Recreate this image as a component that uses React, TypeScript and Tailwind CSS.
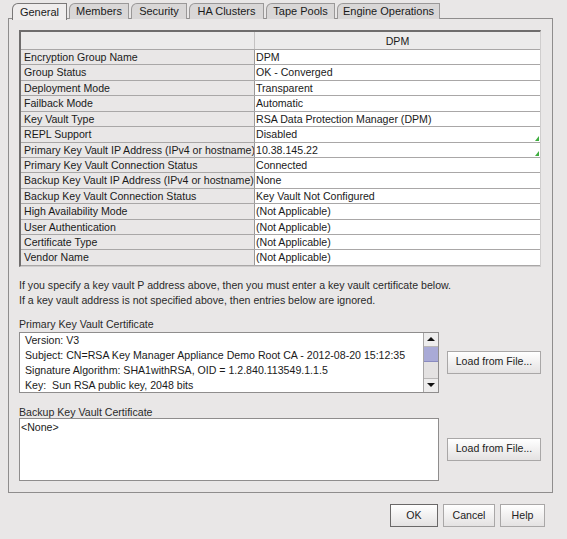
import React from 'react';

const rows: [string, string][] = [
  ['Encryption Group Name', 'DPM'],
  ['Group Status', 'OK - Converged'],
  ['Deployment Mode', 'Transparent'],
  ['Failback Mode', 'Automatic'],
  ['Key Vault Type', 'RSA Data Protection Manager (DPM)'],
  ['REPL Support', 'Disabled'],
  ['Primary Key Vault IP Address (IPv4 or hostname)', '10.38.145.22'],
  ['Primary Key Vault Connection Status', 'Connected'],
  ['Backup Key Vault IP Address (IPv4 or hostname)', 'None'],
  ['Backup Key Vault Connection Status', 'Key Vault Not Configured'],
  ['High Availability Mode', '(Not Applicable)'],
  ['User Authentication', '(Not Applicable)'],
  ['Certificate Type', '(Not Applicable)'],
  ['Vendor Name', '(Not Applicable)'],
];

const tabs: [string, string][] = [
  ['General', 'w-[55px]'],
  ['Members', 'w-[60px]'],
  ['Security', 'w-[56px]'],
  ['HA Clusters', 'w-[75px]'],
  ['Tape Pools', 'w-[69px]'],
  ['Engine Operations', 'w-[103px]'],
];

const Button: React.FC<{ label: string; w: string; focused?: boolean }> = ({ label, w, focused }) => (
  <div
    className={`${w} h-[23px] flex items-center justify-center bg-gradient-to-b from-white to-[#e4e2e2] border ${
      focused ? 'border-[#6a6868]' : 'border-[#a9a7a7]'
    } text-[#222]`}
  >
    {label}
  </div>
);

export default function App() {
  return (
    <div
      className="w-[567px] h-[539px] bg-[#e9e7e7] text-[10.6px] text-[#1a1a1a] relative overflow-hidden"
      style={{ fontFamily: '"Liberation Sans", Arial, sans-serif' }}
    >
      {/* Tabs */}
      <div className="flex items-end h-[19px] pl-[12px] pt-[2px] gap-[2px] text-[11px]">
        {tabs.map(([t, w], i) => (
          <div
            key={t}
            className={`${w} flex items-center justify-center border border-b-0 rounded-tl-[6px] ${
              i === 0
                ? 'bg-[#efeded] border-[#7a7878] relative z-10 h-[17px] mb-[-1px]'
                : 'bg-[#d9d7d7] border-[#9a9898] h-[16px]'
            }`}
          >
            {t}
          </div>
        ))}
      </div>

      {/* Tab panel */}
      <div className="ml-[8px] w-[545px] h-[475px] border border-[#8f8d8d] -mt-[1px] px-[10px] pt-[11px]">
        {/* Property table */}
        <div className="w-[522px] border-t-2 border-l-2 border-[#6f6d6d] border-r border-b border-r-[#cfcdcd] border-b-[#cfcdcd] bg-white">
          <div className="flex h-[18px] border-b border-[#a9a7a7]">
            <div className="w-[234px] bg-[#ecebeb] border-r border-[#c4c2c2]" />
            <div className="flex-1 bg-[#ecebeb] flex items-center justify-center pt-[2px]">DPM</div>
          </div>
          {rows.map(([k, v], i) => (
            <div key={k} className="flex h-[15.43px] border-b border-[#a9a7a7] leading-[14px]">
              <div className="w-[234px] bg-[#e9e7e7] border-r border-[#9a9898] pl-[3px] whitespace-nowrap overflow-hidden">
                {k}
              </div>
              <div className="flex-1 bg-white pl-[1px] relative whitespace-nowrap">
                {v}
                {(i === 5 || i === 6) && (
                  <div className="absolute right-[1px] bottom-[1px] w-0 h-0 border-l-[4px] border-l-transparent border-b-[5px] border-b-[#3fae3f]" />
                )}
              </div>
            </div>
          ))}
        </div>

        {/* Notes */}
        <div className="mt-[11px] leading-[15px] text-[#2a2a2a]">
          <div>If you specify a key vault P address above, then you must enter a key vault certificate below.</div>
          <div>If a key vault address is not specified above, then entries below are ignored.</div>
        </div>

        {/* Primary cert */}
        <div className="mt-[9px] text-[#2a2a2a] leading-[14px]">Primary Key Vault Certificate</div>
        <div className="flex items-center mt-[1px]">
          <div className="w-[420px] h-[61px] border border-[#8f8d8d] bg-white flex">
            <div className="flex-1 pl-[5px] leading-[15px] whitespace-nowrap overflow-hidden">
              <div>Version: V3</div>
              <div>Subject: CN=RSA Key Manager Appliance Demo Root CA - 2012-08-20 15:12:35</div>
              <div>Signature Algorithm: SHA1withRSA, OID = 1.2.840.113549.1.1.5</div>
              <div>Key:&nbsp; Sun RSA public key, 2048 bits</div>
            </div>
            <div className="w-[15px] border-l border-[#a9a7a7] flex flex-col bg-[#e4e2e2]">
              <div className="h-[14px] bg-[#eeeded] border-b border-[#b9b7b7] flex items-center justify-center">
                <div className="w-0 h-0 border-l-[4px] border-r-[4px] border-b-[4px] border-l-transparent border-r-transparent border-b-[#111]" />
              </div>
              <div className="h-[15px] bg-[#a9aad6] border-b border-[#8a8bc0]" />
              <div className="flex-1" />
              <div className="h-[14px] bg-[#eeeded] border-t border-[#b9b7b7] flex items-center justify-center">
                <div className="w-0 h-0 border-l-[4px] border-r-[4px] border-t-[4px] border-l-transparent border-r-transparent border-t-[#111]" />
              </div>
            </div>
          </div>
          <div className="ml-[8px]">
            <Button label="Load from File..." w="w-[94px]" />
          </div>
        </div>

        {/* Backup cert */}
        <div className="mt-[13px] text-[#2a2a2a] leading-[12px]">Backup Key Vault Certificate</div>
        <div className="flex items-center">
          <div className="w-[420px] h-[63px] border border-[#8f8d8d] bg-white pl-[1px] pt-[1px] leading-[14px]">
            &lt;None&gt;
          </div>
          <div className="ml-[8px]">
            <Button label="Load from File..." w="w-[94px]" />
          </div>
        </div>
      </div>

      {/* Dialog buttons */}
      <div className="flex justify-end gap-[5px] pr-[22px] mt-[11px]">
        <Button label="OK" w="w-[48px]" focused />
        <Button label="Cancel" w="w-[52px]" />
        <Button label="Help" w="w-[45px]" />
      </div>
    </div>
  );
}
